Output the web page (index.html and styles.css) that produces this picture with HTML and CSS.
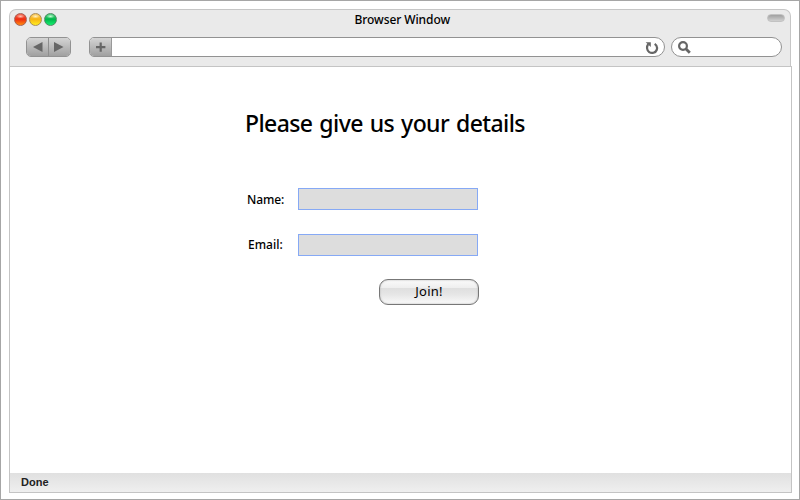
FILE: index.html
```html
<!DOCTYPE html>
<html lang="en">
<head>
<meta charset="utf-8">
<title>Browser Window</title>
<link rel="stylesheet" href="styles.css">
</head>
<body>
<div class="frame">
  <header class="chrome">
    <div class="titlebar">
      <div class="lights"><i class="light red"></i><i class="light yellow"></i><i class="light green"></i></div>
      <span class="title">Browser Window</span>
      <i class="pill"></i>
    </div>
    <div class="toolbar">
      <div class="nav">
        <span class="nav-btn"><svg width="21" height="18" viewBox="0 0 21 18"><path d="M6 9 15.5 4V14Z"/></svg></span>
        <span class="nav-btn"><svg width="22" height="18" viewBox="0 0 22 18"><path d="M14.5 9 5 4V14Z"/></svg></span>
      </div>
      <div class="address">
        <span class="plus"><svg width="21" height="18" viewBox="0 0 21 18"><path d="M6 8h3.6V4.5h2.2V8h3.6v2.2h-3.6v3.5H9.6v-3.5H6Z"/></svg></span>
        <svg class="reload" width="14" height="14" viewBox="0 0 14 14"><path class="arc" d="M3.2 3.2C1.4 5.8 1.7 9.4 4.2 11.1C6.8 12.8 10.6 11.9 11.7 9C12.5 6.7 11.8 4.2 9.7 2.8"/><path d="M.7 1.2H5.8v4.9Z"/></svg>
      </div>
      <div class="search"><svg width="14" height="14" viewBox="0 0 14 14"><circle class="lens" cx="5" cy="5" r="3.9"/><path class="handle" d="m7.8 7.8 4 4"/></svg></div>
    </div>
  </header>
  <main class="page">
    <form class="details">
      <h1>Please give us your details</h1>
      <div class="row"><label class="name" for="name">Name:</label><input id="name" type="text"></div>
      <div class="row"><label class="email" for="email">Email:</label><input id="email" type="text"></div>
      <button type="button"><span>Join!</span></button>
    </form>
  </main>
  <footer class="status">Done</footer>
</div>
</body>
</html>
```
FILE: styles.css
```css
* { box-sizing: border-box; }
body { margin: 0; background: #fff; color: #000; font-family: "Noto Sans", sans-serif; }
svg { display: block; fill: #666; }
.frame { width: 800px; height: 500px; padding: 8px 7px 6px 8px; border: 1px solid #a6a6a6; display: flex; flex-direction: column; }
.chrome { width: 782px; height: 57px; background: #eaeaea; border: 1px solid #c6c6c6; border-bottom: 0; border-radius: 7px 7px 0 0; }
.titlebar { height: 18px; display: grid; grid-template-columns: 1fr 96px 1fr; padding: 0 5px 0 4px; }
.lights { display: flex; gap: 2px; padding-top: 3px; }
.light { width: 13px; height: 13px; border-radius: 50%; border: 1px solid #968a80; }
.red { background: radial-gradient(ellipse 4px 2px at 50% 22%, #ffc4b5, transparent), linear-gradient(#f66a55, #ef2d12 48%, #ff8d10); border-color: #a66055; }
.yellow { background: radial-gradient(ellipse 4px 2px at 50% 22%, #fff3c4, transparent), linear-gradient(#f8ca66, #f8b414 48%, #ffee20); border-color: #aa8d55; }
.green { background: radial-gradient(ellipse 4px 2px at 50% 22%, #c5ffd5, transparent), linear-gradient(#58d383, #00b64a 48%, #14ee70); border-color: #508963; }
.title { padding: 1px 0 0 3px; font-size: 12px; line-height: 18px; font-weight: 500; letter-spacing: -.08px; white-space: nowrap; }
.pill { justify-self: end; margin-top: 4px; width: 18px; height: 8px; border-radius: 4px; border: 1px solid #c2c2c2; background: linear-gradient(#a0a0a0, #d0d0d0); }
.toolbar { display: flex; height: 20px; margin: 9px 8px 0 16px; }
.nav, .address, .search { height: 20px; border: 1px solid #929292; overflow: hidden; display: flex; }
.nav { width: 45px; border-radius: 5px; margin-right: 18px; }
.nav-btn, .plus { background: linear-gradient(#d4d4d4, #a0a0a0); }
.nav-btn { width: 21px; }
.nav-btn + .nav-btn { width: 22px; border-left: 1px solid #8e8e8e; }
.plus { width: 22px; border-right: 1px solid #999; }
.address { width: 576px; background: #fff; border-radius: 5px 10px 10px 5px; margin-right: 6px; }
.reload { margin: 3px 5px 0 auto; }
.arc, .lens, .handle { fill: none; stroke: #666; stroke-width: 2.2; }
.handle { stroke-width: 2.8; }
.search { width: 111px; background: #fff; border-radius: 10px; padding: 3px 0 0 6px; }
.page { height: 407px; padding: 41px 0 0 235px; background: #fff; border: solid #c4c4c4; border-width: 1px 1px 0; }
.details { width: 284px; }
h1 { margin: 0 0 50px; font-size: 23px; line-height: 30px; font-weight: 500; letter-spacing: -.6px; word-spacing: 1.6px; white-space: nowrap; }
.row { display: flex; height: 22px; margin-bottom: 24px; }
.row label { width: 53px; padding-left: 2px; font-size: 12px; line-height: 24px; font-weight: 500; letter-spacing: -.1px; }
.row .email { padding-left: 3px; line-height: 22px; letter-spacing: 0; }
input { width: 180px; height: 22px; padding: 1px 4px; border: 1px solid #86a9f5; border-radius: 0; background: #ddd; outline: 0; }
button { display: block; width: 100px; height: 26px; margin: -1px 0 0 134px; padding: 0 0 2px; border: 1px solid #777; border-radius: 9px; background: linear-gradient(#fafafa, #eee 34%, #dfdfdf 35%, #e6e6e6 60%, #fafafa); box-shadow: inset 0 0 2px #aaa; font: 450 13px/20px "Noto Sans", sans-serif; letter-spacing: .2px; color: #000; }
.status { height: 20px; padding-left: 11px; border: 1px solid #c4c4c4; border-top: 0; background: linear-gradient(#e0e0e0, #efefef); font: 700 11px/19px "Liberation Sans", sans-serif; color: #222; }
```
